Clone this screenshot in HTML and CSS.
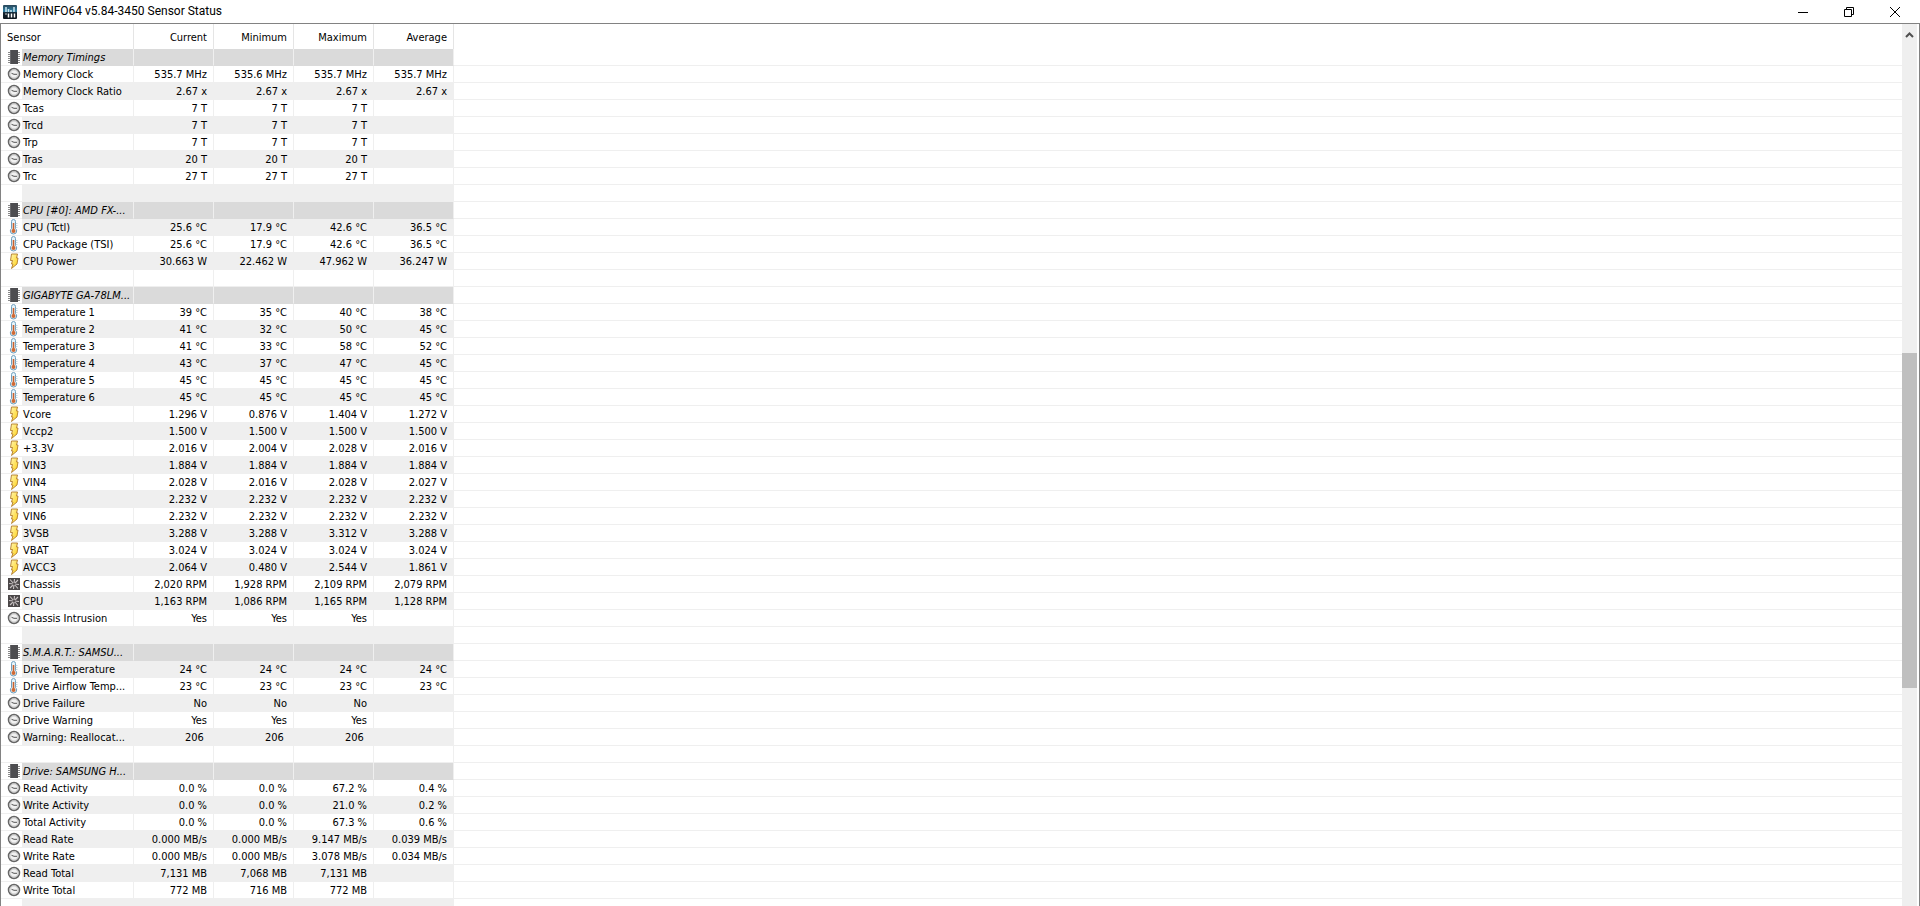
FILE: index.html
```html
<!DOCTYPE html>
<html lang="en">
<head>
    <meta charset="UTF-8">
    <meta name="viewport" content="width=device-width, initial-scale=1.0">
    <title>HWiNFO64 v5.84-3450 Sensor Status</title>
    <link rel="stylesheet" href="styles.css">
</head>
<body>
    <svg class="sprite" aria-hidden="true">
        <defs>
            <linearGradient id="logo-bg" x1="0" y1="0" x2="0" y2="1">
                <stop offset="0" stop-color="#2a4658"/>
                <stop offset=".45" stop-color="#2f83a8"/>
                <stop offset=".55" stop-color="#12222e"/>
                <stop offset="1" stop-color="#0c151c"/>
            </linearGradient>
            <linearGradient id="bolt-bg" x1="0" y1="0" x2="1" y2="1">
                <stop offset="0" stop-color="#fff6b0"/>
                <stop offset="1" stop-color="#ffcf10"/>
            </linearGradient>
        </defs>
        <symbol id="chip" viewBox="0 0 14 16">
            <path d="M1 3.5h12M1 5.5h12M1 7.5h12M1 9.5h12M1 11.5h12M1 13.5h12" stroke="#8a8a8a"/>
            <rect x="3" y="1" width="8" height="14" fill="#4d4d50"/>
            <path d="M3.500 1v14" stroke="#69696c"/>
        </symbol>
        <symbol id="clock" viewBox="0 0 14 16">
            <circle cx="7" cy="8" r="5.500" fill="#f1f1f1" stroke="#666" stroke-width="1.500"/>
            <circle cx="7" cy="8" r="4.200" fill="none" stroke="#bbb"/>
            <path d="M4.500 7.300l2.500 1h3" fill="none" stroke="#555"/>
        </symbol>
        <symbol id="temp" viewBox="0 0 14 16">
            <path d="M4.500 2.500q0-2 2-2t2 2v7q1.200 1 1.200 2.500q0 3-3.200 3t-3.200-3q0-1.500 1.200-2.500z" fill="#e4f3fb" stroke="#6f9fbd"/>
            <path d="M6.500 4v8" stroke="#c8622e" stroke-width="1.600"/>
            <circle cx="6.500" cy="12" r="2" fill="#cf6a35"/>
            <path d="M8.500 4.500h2M8.500 6.500h2M8.500 8.500h2" stroke="#a9c4d3" stroke-width=".7"/>
        </symbol>
        <symbol id="bolt" viewBox="0 0 14 16">
            <path d="M4.500 1h6l-1 4h1.500l-1 6l-5.500 4.500l1.500-4.500h-1.500l1-3.500h-2z" fill="url(#bolt-bg)" stroke="#b07a2c" stroke-width=".9"/>
        </symbol>
        <symbol id="fan" viewBox="0 0 14 16">
            <rect x="1" y="2" width="12" height="12" fill="#4b4748"/>
            <path d="M7 8L3 3.500M7 8L7.500 3M7 8l4-4M7 8l5 .5M7 8l4 4.500M7 8l-.5 5M7 8l-4 4M7 8L2 7.500" stroke="#c9c3c4" stroke-width="1.100"/>
            <circle cx="7" cy="8" r="1.600" fill="#5a5556"/>
        </symbol>
    </svg>

    <div class="window">
        <header class="titlebar">
            <svg class="logo" viewBox="0 0 14 14" aria-hidden="true">
                <rect width="14" height="14" rx="1" fill="url(#logo-bg)"/>
                <path d="M3 2v5M5.500 4v3M8 5v2M11 2v5" stroke="#c9e6f2" stroke-width="1.500"/>
                <path d="M3 8.500v1M5.500 8.500v4M8.500 8.500v4M11.500 8.500v4" stroke="#fff" stroke-width="1.500"/>
            </svg>
            <h1 class="title">HWiNFO64 v5.84-3450 Sensor Status</h1>
            <div class="controls">
                <button type="button" aria-label="Minimize"><svg viewBox="0 0 12 12"><path d="M1 6.500h10"/></svg></button>
                <button type="button" aria-label="Restore"><svg viewBox="0 0 12 12"><path d="M1.500 3.500h7v7h-7zM3.500 3v-1.500h7v7h-2"/></svg></button>
                <button type="button" aria-label="Close"><svg viewBox="0 0 12 12"><path d="M1 1l10 10M11 1l-10 10"/></svg></button>
            </div>
        </header>

        <main class="content">
            <div class="list">
                <table class="sensors">
                    <colgroup>
                        <col class="col-icon">
                        <col class="col-name">
                        <col class="col-value">
                        <col class="col-value">
                        <col class="col-value">
                        <col class="col-value">
                        <col>
                    </colgroup>
                    <thead>
                        <tr><th colspan="2">Sensor</th><th>Current</th><th>Minimum</th><th>Maximum</th><th>Average</th><th></th></tr>
                    </thead>
                    <tbody>
                        <tr class="group"><td><svg><use href="#chip"/></svg></td><td>Memory Timings</td><td></td><td></td><td></td><td></td><td></td></tr>
                        <tr><td><svg><use href="#clock"/></svg></td><td>Memory Clock</td><td>535.7 MHz</td><td>535.6 MHz</td><td>535.7 MHz</td><td>535.7 MHz</td><td></td></tr>
                        <tr><td><svg><use href="#clock"/></svg></td><td>Memory Clock Ratio</td><td>2.67 x</td><td>2.67 x</td><td>2.67 x</td><td>2.67 x</td><td></td></tr>
                        <tr><td><svg><use href="#clock"/></svg></td><td>Tcas</td><td>7 T</td><td>7 T</td><td>7 T</td><td></td><td></td></tr>
                        <tr><td><svg><use href="#clock"/></svg></td><td>Trcd</td><td>7 T</td><td>7 T</td><td>7 T</td><td></td><td></td></tr>
                        <tr><td><svg><use href="#clock"/></svg></td><td>Trp</td><td>7 T</td><td>7 T</td><td>7 T</td><td></td><td></td></tr>
                        <tr><td><svg><use href="#clock"/></svg></td><td>Tras</td><td>20 T</td><td>20 T</td><td>20 T</td><td></td><td></td></tr>
                        <tr><td><svg><use href="#clock"/></svg></td><td>Trc</td><td>27 T</td><td>27 T</td><td>27 T</td><td></td><td></td></tr>
                        <tr><td></td><td></td><td></td><td></td><td></td><td></td><td></td></tr>

                        <tr class="group"><td><svg><use href="#chip"/></svg></td><td>CPU [#0]: AMD FX-...</td><td></td><td></td><td></td><td></td><td></td></tr>
                        <tr><td><svg><use href="#temp"/></svg></td><td>CPU (Tctl)</td><td>25.6 °C</td><td>17.9 °C</td><td>42.6 °C</td><td>36.5 °C</td><td></td></tr>
                        <tr><td><svg><use href="#temp"/></svg></td><td>CPU Package (TSI)</td><td>25.6 °C</td><td>17.9 °C</td><td>42.6 °C</td><td>36.5 °C</td><td></td></tr>
                        <tr><td><svg><use href="#bolt"/></svg></td><td>CPU Power</td><td>30.663 W</td><td>22.462 W</td><td>47.962 W</td><td>36.247 W</td><td></td></tr>
                        <tr><td></td><td></td><td></td><td></td><td></td><td></td><td></td></tr>

                        <tr class="group"><td><svg><use href="#chip"/></svg></td><td>GIGABYTE GA-78LM...</td><td></td><td></td><td></td><td></td><td></td></tr>
                        <tr><td><svg><use href="#temp"/></svg></td><td>Temperature 1</td><td>39 °C</td><td>35 °C</td><td>40 °C</td><td>38 °C</td><td></td></tr>
                        <tr><td><svg><use href="#temp"/></svg></td><td>Temperature 2</td><td>41 °C</td><td>32 °C</td><td>50 °C</td><td>45 °C</td><td></td></tr>
                        <tr><td><svg><use href="#temp"/></svg></td><td>Temperature 3</td><td>41 °C</td><td>33 °C</td><td>58 °C</td><td>52 °C</td><td></td></tr>
                        <tr><td><svg><use href="#temp"/></svg></td><td>Temperature 4</td><td>43 °C</td><td>37 °C</td><td>47 °C</td><td>45 °C</td><td></td></tr>
                        <tr><td><svg><use href="#temp"/></svg></td><td>Temperature 5</td><td>45 °C</td><td>45 °C</td><td>45 °C</td><td>45 °C</td><td></td></tr>
                        <tr><td><svg><use href="#temp"/></svg></td><td>Temperature 6</td><td>45 °C</td><td>45 °C</td><td>45 °C</td><td>45 °C</td><td></td></tr>
                        <tr><td><svg><use href="#bolt"/></svg></td><td>Vcore</td><td>1.296 V</td><td>0.876 V</td><td>1.404 V</td><td>1.272 V</td><td></td></tr>
                        <tr><td><svg><use href="#bolt"/></svg></td><td>Vccp2</td><td>1.500 V</td><td>1.500 V</td><td>1.500 V</td><td>1.500 V</td><td></td></tr>
                        <tr><td><svg><use href="#bolt"/></svg></td><td>+3.3V</td><td>2.016 V</td><td>2.004 V</td><td>2.028 V</td><td>2.016 V</td><td></td></tr>
                        <tr><td><svg><use href="#bolt"/></svg></td><td>VIN3</td><td>1.884 V</td><td>1.884 V</td><td>1.884 V</td><td>1.884 V</td><td></td></tr>
                        <tr><td><svg><use href="#bolt"/></svg></td><td>VIN4</td><td>2.028 V</td><td>2.016 V</td><td>2.028 V</td><td>2.027 V</td><td></td></tr>
                        <tr><td><svg><use href="#bolt"/></svg></td><td>VIN5</td><td>2.232 V</td><td>2.232 V</td><td>2.232 V</td><td>2.232 V</td><td></td></tr>
                        <tr><td><svg><use href="#bolt"/></svg></td><td>VIN6</td><td>2.232 V</td><td>2.232 V</td><td>2.232 V</td><td>2.232 V</td><td></td></tr>
                        <tr><td><svg><use href="#bolt"/></svg></td><td>3VSB</td><td>3.288 V</td><td>3.288 V</td><td>3.312 V</td><td>3.288 V</td><td></td></tr>
                        <tr><td><svg><use href="#bolt"/></svg></td><td>VBAT</td><td>3.024 V</td><td>3.024 V</td><td>3.024 V</td><td>3.024 V</td><td></td></tr>
                        <tr><td><svg><use href="#bolt"/></svg></td><td>AVCC3</td><td>2.064 V</td><td>0.480 V</td><td>2.544 V</td><td>1.861 V</td><td></td></tr>
                        <tr><td><svg><use href="#fan"/></svg></td><td>Chassis</td><td>2,020 RPM</td><td>1,928 RPM</td><td>2,109 RPM</td><td>2,079 RPM</td><td></td></tr>
                        <tr><td><svg><use href="#fan"/></svg></td><td>CPU</td><td>1,163 RPM</td><td>1,086 RPM</td><td>1,165 RPM</td><td>1,128 RPM</td><td></td></tr>
                        <tr><td><svg><use href="#clock"/></svg></td><td>Chassis Intrusion</td><td>Yes</td><td>Yes</td><td>Yes</td><td></td><td></td></tr>
                        <tr><td></td><td></td><td></td><td></td><td></td><td></td><td></td></tr>

                        <tr class="group"><td><svg><use href="#chip"/></svg></td><td>S.M.A.R.T.: SAMSU...</td><td></td><td></td><td></td><td></td><td></td></tr>
                        <tr><td><svg><use href="#temp"/></svg></td><td>Drive Temperature</td><td>24 °C</td><td>24 °C</td><td>24 °C</td><td>24 °C</td><td></td></tr>
                        <tr><td><svg><use href="#temp"/></svg></td><td>Drive Airflow Temp...</td><td>23 °C</td><td>23 °C</td><td>23 °C</td><td>23 °C</td><td></td></tr>
                        <tr><td><svg><use href="#clock"/></svg></td><td>Drive Failure</td><td>No</td><td>No</td><td>No</td><td></td><td></td></tr>
                        <tr><td><svg><use href="#clock"/></svg></td><td>Drive Warning</td><td>Yes</td><td>Yes</td><td>Yes</td><td></td><td></td></tr>
                        <tr><td><svg><use href="#clock"/></svg></td><td>Warning: Reallocat...</td><td>206&nbsp;</td><td>206&nbsp;</td><td>206&nbsp;</td><td></td><td></td></tr>
                        <tr><td></td><td></td><td></td><td></td><td></td><td></td><td></td></tr>

                        <tr class="group"><td><svg><use href="#chip"/></svg></td><td>Drive: SAMSUNG H...</td><td></td><td></td><td></td><td></td><td></td></tr>
                        <tr><td><svg><use href="#clock"/></svg></td><td>Read Activity</td><td>0.0 %</td><td>0.0 %</td><td>67.2 %</td><td>0.4 %</td><td></td></tr>
                        <tr><td><svg><use href="#clock"/></svg></td><td>Write Activity</td><td>0.0 %</td><td>0.0 %</td><td>21.0 %</td><td>0.2 %</td><td></td></tr>
                        <tr><td><svg><use href="#clock"/></svg></td><td>Total Activity</td><td>0.0 %</td><td>0.0 %</td><td>67.3 %</td><td>0.6 %</td><td></td></tr>
                        <tr><td><svg><use href="#clock"/></svg></td><td>Read Rate</td><td>0.000 MB/s</td><td>0.000 MB/s</td><td>9.147 MB/s</td><td>0.039 MB/s</td><td></td></tr>
                        <tr><td><svg><use href="#clock"/></svg></td><td>Write Rate</td><td>0.000 MB/s</td><td>0.000 MB/s</td><td>3.078 MB/s</td><td>0.034 MB/s</td><td></td></tr>
                        <tr><td><svg><use href="#clock"/></svg></td><td>Read Total</td><td>7,131 MB</td><td>7,068 MB</td><td>7,131 MB</td><td></td><td></td></tr>
                        <tr><td><svg><use href="#clock"/></svg></td><td>Write Total</td><td>772 MB</td><td>716 MB</td><td>772 MB</td><td></td><td></td></tr>
                        <tr><td></td><td></td><td></td><td></td><td></td><td></td><td></td></tr>
                    </tbody>
                </table>
            </div>
            <div class="scrollbar">
                <button type="button" class="scroll-up" aria-label="Scroll up"><svg viewBox="0 0 9 6"><path d="M1 5l3.500-3.500l3.500 3.500"/></svg></button>
                <div class="space-above"></div>
                <div class="thumb"></div>
                <div class="space-below"></div>
            </div>
        </main>
    </div>
</body>
</html>
```
FILE: styles.css
```css
* {
    box-sizing: border-box;
}
body {
    margin: 0;
    background-color: white;
    color: black;
    font-family: Tahoma, "DejaVu Sans Condensed", "DejaVu Sans", sans-serif;
    font-size: 11px;
}
button {
    border: 0;
    padding: 0;
    background: none;
}
.sprite {
    position: absolute;
    width: 0;
    height: 0;
}
.window {
    display: flex;
    flex-direction: column;
    height: 100vh;
    overflow: hidden;
}

/* title bar */
.titlebar {
    display: flex;
    align-items: center;
    flex: none;
    height: 23px;
    padding-left: 3px;
}
.logo {
    width: 14px;
    height: 14px;
}
.title {
    flex: 1;
    margin: 0 0 0 6px;
    font-family: "Segoe UI", Roboto, sans-serif;
    font-size: 12px;
    font-weight: normal;
    line-height: 23px;
}
.controls {
    display: flex;
    height: 20px;
    padding-right: 2px;
}
.controls button {
    display: flex;
    align-items: center;
    justify-content: center;
    width: 46px;
}
.controls svg {
    width: 12px;
    height: 12px;
    fill: none;
    stroke: black;
}

/* sensor list */
.content {
    display: flex;
    flex: 1;
    min-height: 0;
    border: 1px solid #828282;
    border-bottom: 0;
    padding-right: 2px;
}
.list {
    flex: 1;
    overflow: hidden;
}
.sensors {
    width: 100%;
    table-layout: fixed;
    border-collapse: separate;
    border-spacing: 0;
}
.col-icon {
    width: 21px;
}
.col-name {
    width: 112px;
}
.col-value {
    width: 80px;
}
.sensors th {
    height: 25px;
    padding: 0 6px 3px 0;
    border-right: 1px solid #e5e5e5;
    font-weight: normal;
    line-height: 16px;
    text-align: right;
    vertical-align: bottom;
}
.sensors th:first-child {
    padding-left: 6px;
    text-align: left;
}
.sensors td {
    height: 17px;
    padding: 2px 6px 0 0;
    border-right: 1px solid #efefef;
    border-bottom: 1px solid #efefef;
    line-height: 14px;
    text-align: right;
    white-space: nowrap;
    overflow: hidden;
}
.sensors td:nth-child(1) {
    padding: 0 0 0 6px;
    border-right: 0;
    text-align: left;
}
.sensors td:nth-child(2) {
    padding-left: 1px;
    padding-right: 0;
    text-align: left;
}
.sensors th:last-child,
.sensors td:last-child {
    border-right: 0;
}
.sensors tr:nth-child(odd) td:not(:first-child):not(:last-child) {
    background-color: #efefef;
}
.sensors tr.group td:not(:first-child):not(:last-child) {
    background-color: #dadada;
    border-bottom-color: #dadada;
    font-style: italic;
}
.sensors td svg {
    display: block;
    width: 14px;
    height: 16px;
}

/* scrollbar */
.scrollbar {
    display: flex;
    flex-direction: column;
    width: 15px;
    background-color: #efefef;
}
.scroll-up {
    height: 19px;
}
.scroll-up svg {
    width: 9px;
    height: 6px;
    fill: none;
    stroke: #505050;
    stroke-width: 2;
}
.space-above {
    flex: 310;
}
.thumb {
    flex: 335;
    background-color: #bfbfbf;
}
.space-below {
    flex: 218;
}
```
